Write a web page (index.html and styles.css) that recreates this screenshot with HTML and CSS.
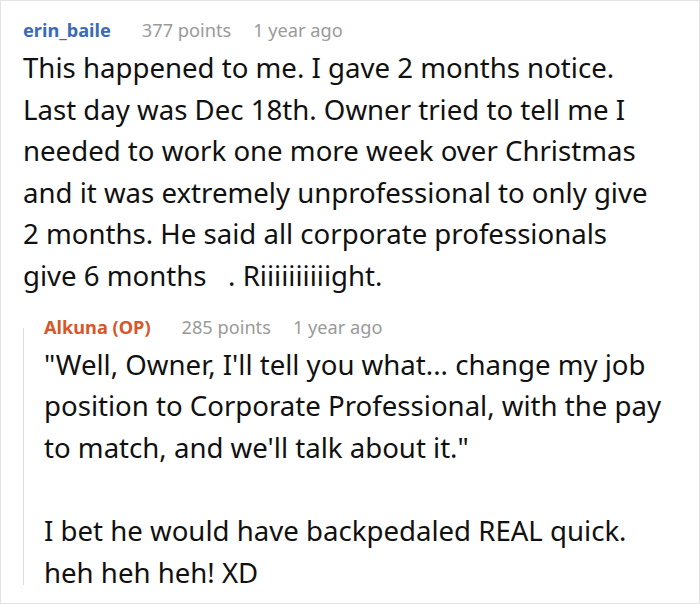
FILE: index.html
```html
<!DOCTYPE html>
<html>
<head>
<meta charset="utf-8">
<link rel="stylesheet" href="styles.css">
</head>
<body>
<div class="card">
  <div class="comment">
    <div class="meta">
      <span class="user user-blue">erin_baile</span>
      <span class="points">377 points</span>
      <span class="time">1 year ago</span>
    </div>
    <div class="text text-main">
      This happened to me. I gave 2 months notice. Last day was Dec 18th. Owner tried to tell me I needed to work one more week over Christmas and it was extremely unprofessional to only give 2 months. He said all corporate professionals give 6 months&nbsp;&nbsp;&nbsp;. Riiiiiiiiiight.
    </div>
  </div>
  <div class="reply">
    <div class="thread-line"></div>
    <div class="reply-body">
      <div class="meta">
        <span class="user user-orange">Alkuna (OP)</span>
        <span class="points">285 points</span>
        <span class="time">1 year ago</span>
      </div>
      <div class="text">
        <p>"Well, Owner, I'll tell you what... change my job position to Corporate Professional, with the pay to match, and we'll talk about it."</p>
        <p class="spaced">I bet he would have backpedaled REAL quick. heh heh heh! XD</p>
      </div>
    </div>
  </div>
</div>
</body>
</html>
```

FILE: styles.css
```css
html, body {
  margin: 0;
  padding: 0;
  background: #ffffff;
}

.card {
  width: 700px;
  height: 604px;
  box-sizing: border-box;
  border: 1px solid #e3e3e3;
  padding: 17px 26px 0 22px;
  overflow: hidden;
  font-family: "Noto Sans", "Open Sans", sans-serif;
  color: #111111;
}

.meta {
  display: flex;
  align-items: baseline;
  font-size: 18.2px;
  line-height: 24px;
  height: 24px;
}

.user {
  font-weight: 700;
  margin-right: 31px;
}

.user-blue {
  color: #3a6bb7;
}

.user-orange {
  color: #d9562a;
}

.points {
  color: #9a9a9a;
  margin-right: 22px;
}

.time {
  color: #9a9a9a;
}

.text {
  margin-top: 5px;
  font-size: 27.6px;
  line-height: 41.6px;
}

.text-main {
  margin-right: 16px;
}

.text p {
  margin: 0;
}

.text p.spaced {
  margin-top: 41.6px;
}

.reply {
  display: flex;
  margin-top: 18px;
}

.thread-line {
  width: 1px;
  background: #dddddd;
  margin: 13px 0 8px 0;
  flex-shrink: 0;
}

.reply-body {
  padding-left: 20px;
  flex: 1;
}
```
